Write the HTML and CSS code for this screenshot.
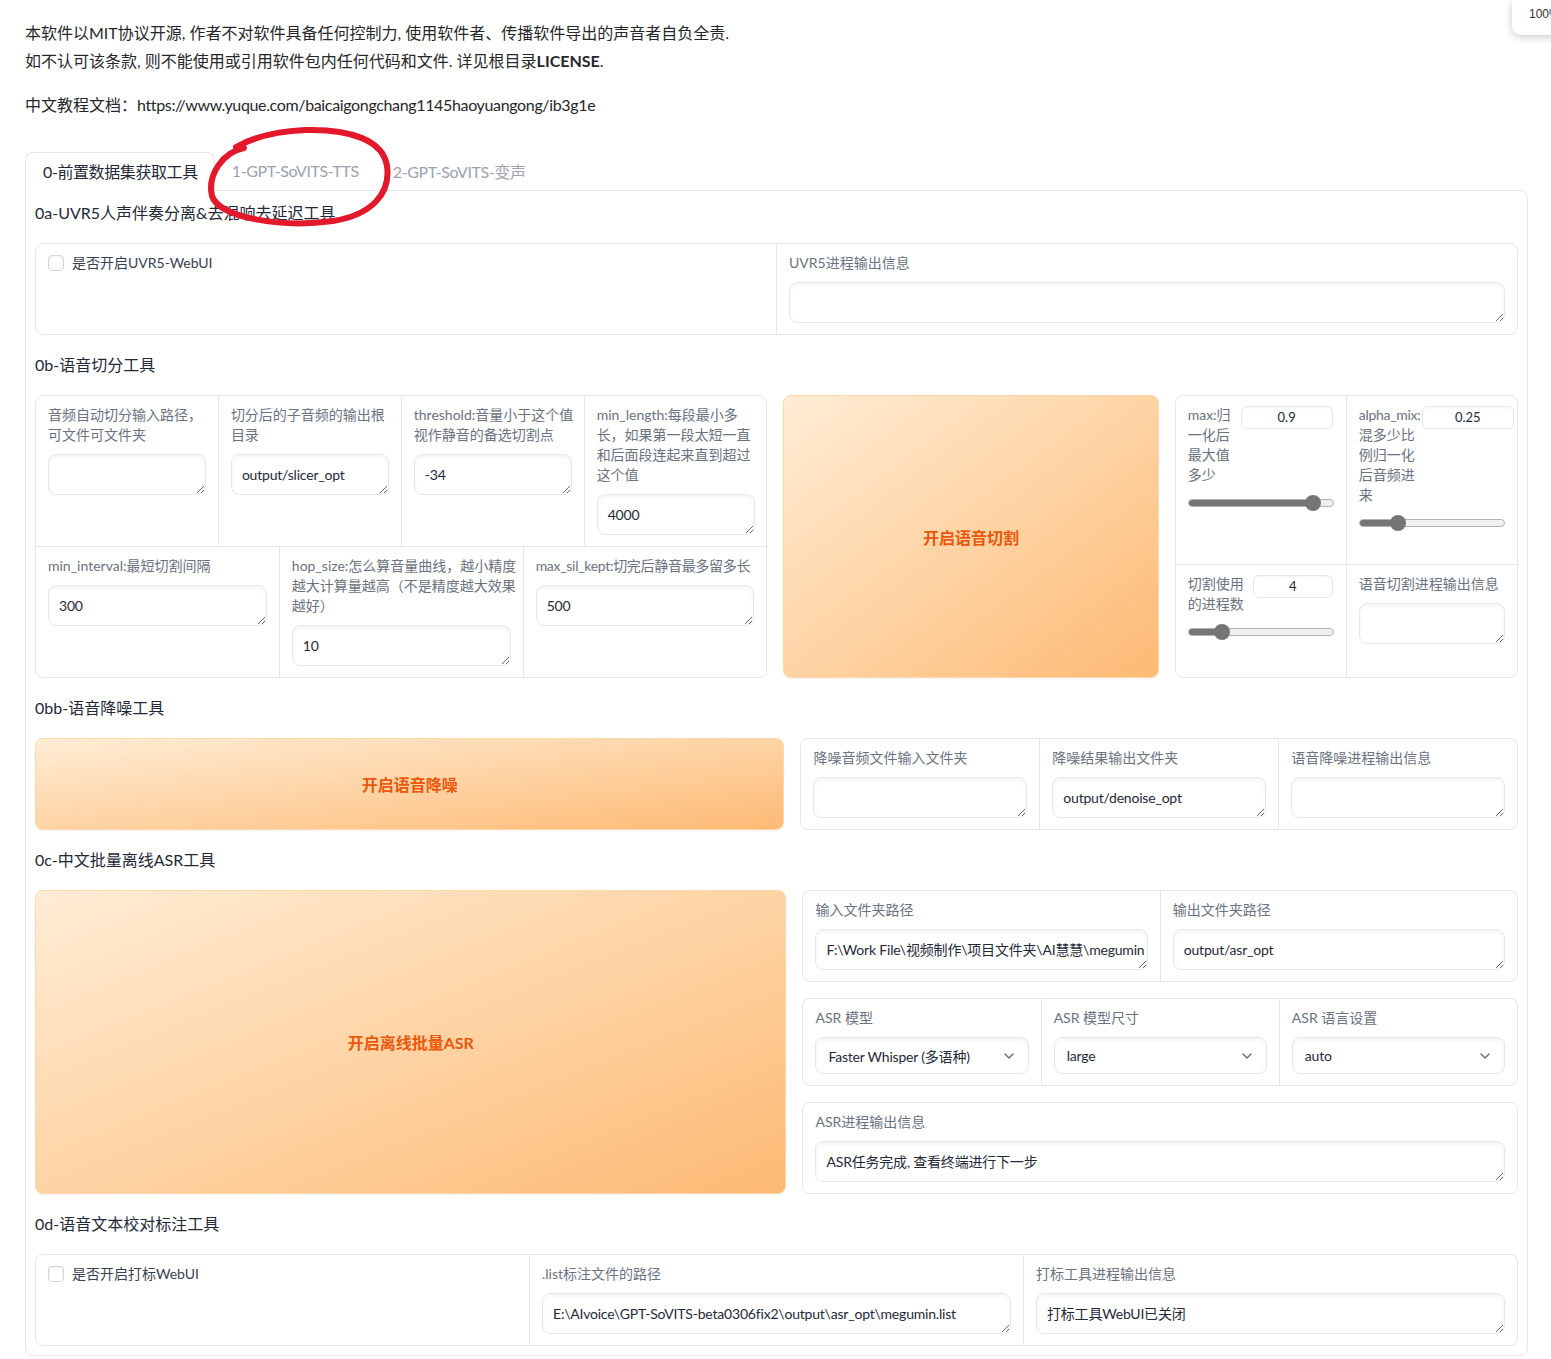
FILE: index.html
```html
<!DOCTYPE html>
<html lang="zh-CN">
<head>
<meta charset="utf-8">
<title>GPT-SoVITS WebUI</title>
<link rel="stylesheet" href="styles.css">
</head>
<body>
<div class="page">
  <div class="intro">
    <p>本软件以MIT协议开源, 作者不对软件具备任何控制力, 使用软件者、传播软件导出的声音者自负全责.<br>如不认可该条款, 则不能使用或引用软件包内任何代码和文件. 详见根目录<strong>LICENSE</strong>.</p>
    <p>中文教程文档：<span class="url">https://www.yuque.com/baicaigongchang1145haoyuangong/ib3g1e</span></p>
  </div>

  <div class="tabs">
    <div class="tab-nav">
      <button class="tab selected">0-前置数据集获取工具</button>
      <button class="tab">1-GPT-SoVITS-TTS</button>
      <button class="tab">2-GPT-SoVITS-变声</button>
    </div>

    <div class="tab-panel">
      <div class="section-title">0a-UVR5人声伴奏分离&amp;去混响去延迟工具</div>
      <div class="row">
        <div class="form grow">
          <div class="cell">
            <label class="check"><input type="checkbox" class="checkbox"><span>是否开启UVR5-WebUI</span></label>
          </div>
          <div class="cell">
            <div class="label">UVR5进程输出信息</div>
            <textarea class="input" wrap="off"></textarea>
          </div>
        </div>
      </div>

      <div class="section-title">0b-语音切分工具</div>
      <div class="row">
        <div class="form stack f-slice-left">
          <div class="form-row">
            <div class="cell">
              <div class="label"><span>音频自动切分输入路径，</span><span>可文件可文件夹</span></div>
              <textarea class="input" wrap="off"></textarea>
            </div>
            <div class="cell">
              <div class="label"><span>切分后的子音频的输出根</span><span>目录</span></div>
              <textarea class="input" wrap="off">output/slicer_opt</textarea>
            </div>
            <div class="cell">
              <div class="label"><span>threshold:音量小于这个值</span><span>视作静音的备选切割点</span></div>
              <textarea class="input" wrap="off">-34</textarea>
            </div>
            <div class="cell">
              <div class="label"><span>min_length:每段最小多</span><span>长，如果第一段太短一直</span><span>和后面段连起来直到超过</span><span>这个值</span></div>
              <textarea class="input" wrap="off">4000</textarea>
            </div>
          </div>
          <div class="form-row">
            <div class="cell">
              <div class="label"><span>min_interval:最短切割间隔</span></div>
              <textarea class="input" wrap="off">300</textarea>
            </div>
            <div class="cell">
              <div class="label"><span>hop_size:怎么算音量曲线，越小精度</span><span>越大计算量越高（不是精度越大效果</span><span>越好）</span></div>
              <textarea class="input" wrap="off">10</textarea>
            </div>
            <div class="cell">
              <div class="label"><span class="tight">max_sil_kept:切完后静音最多留多长</span></div>
              <textarea class="input" wrap="off">500</textarea>
            </div>
          </div>
        </div>

        <button class="btn-primary f-slice-btn">开启语音切割</button>

        <div class="form stack f-slice-right">
          <div class="form-row">
            <div class="cell">
              <div class="slider-head">
                <div class="sl-label w-max"><span>max:归</span><span>一化后</span><span>最大值</span><span>多少</span></div>
                <div class="num n-max">0.9</div>
              </div>
              <div class="slider">
                <div class="track"><div class="fill" style="width:86%"></div></div>
                <div class="thumb" style="left:86%"></div>
              </div>
            </div>
            <div class="cell">
              <div class="slider-head">
                <div class="sl-label w-alpha"><span class="tight">alpha_mix:</span><span>混多少比</span><span>例归一化</span><span>后音频进</span><span>来</span></div>
                <div class="num n-alpha">0.25</div>
              </div>
              <div class="slider">
                <div class="track"><div class="fill" style="width:27%"></div></div>
                <div class="thumb" style="left:27%"></div>
              </div>
            </div>
          </div>
          <div class="form-row">
            <div class="cell">
              <div class="slider-head">
                <div class="sl-label w-proc"><span>切割使用</span><span>的进程数</span></div>
                <div class="num n-proc">4</div>
              </div>
              <div class="slider">
                <div class="track"><div class="fill" style="width:23.5%"></div></div>
                <div class="thumb" style="left:23.5%"></div>
              </div>
            </div>
            <div class="cell">
              <div class="label">语音切割进程输出信息</div>
              <textarea class="input" wrap="off"></textarea>
            </div>
          </div>
        </div>
      </div>

      <div class="section-title">0bb-语音降噪工具</div>
      <div class="row">
        <button class="btn-primary f-denoise-btn">开启语音降噪</button>
        <div class="form f-denoise-form">
          <div class="cell">
            <div class="label">降噪音频文件输入文件夹</div>
            <textarea class="input" wrap="off"></textarea>
          </div>
          <div class="cell">
            <div class="label">降噪结果输出文件夹</div>
            <textarea class="input" wrap="off">output/denoise_opt</textarea>
          </div>
          <div class="cell">
            <div class="label">语音降噪进程输出信息</div>
            <textarea class="input" wrap="off"></textarea>
          </div>
        </div>
      </div>

      <div class="section-title">0c-中文批量离线ASR工具</div>
      <div class="row">
        <button class="btn-primary f-asr-btn">开启离线批量ASR</button>
        <div class="column f-asr-col">
          <div class="form">
            <div class="cell">
              <div class="label">输入文件夹路径</div>
              <textarea class="input" wrap="off">F:\Work File\视频制作\项目文件夹\AI慧慧\megumin</textarea>
            </div>
            <div class="cell">
              <div class="label">输出文件夹路径</div>
              <textarea class="input" wrap="off">output/asr_opt</textarea>
            </div>
          </div>
          <div class="form">
            <div class="cell">
              <div class="label">ASR 模型</div>
              <div class="dropdown"><span>Faster Whisper (多语种)</span><svg class="chev" viewBox="0 0 10 6" width="10" height="6"><polyline points="1,1 5,5 9,1"/></svg></div>
            </div>
            <div class="cell">
              <div class="label">ASR 模型尺寸</div>
              <div class="dropdown"><span>large</span><svg class="chev" viewBox="0 0 10 6" width="10" height="6"><polyline points="1,1 5,5 9,1"/></svg></div>
            </div>
            <div class="cell">
              <div class="label">ASR 语言设置</div>
              <div class="dropdown"><span>auto</span><svg class="chev" viewBox="0 0 10 6" width="10" height="6"><polyline points="1,1 5,5 9,1"/></svg></div>
            </div>
          </div>
          <div class="form">
            <div class="cell">
              <div class="label">ASR进程输出信息</div>
              <textarea class="input" wrap="off">ASR任务完成, 查看终端进行下一步</textarea>
            </div>
          </div>
        </div>
      </div>

      <div class="section-title">0d-语音文本校对标注工具</div>
      <div class="row">
        <div class="form grow">
          <div class="cell">
            <label class="check"><input type="checkbox" class="checkbox"><span>是否开启打标WebUI</span></label>
          </div>
          <div class="cell">
            <div class="label">.list标注文件的路径</div>
            <textarea class="input" wrap="off">E:\AIvoice\GPT-SoVITS-beta0306fix2\output\asr_opt\megumin.list</textarea>
          </div>
          <div class="cell">
            <div class="label">打标工具进程输出信息</div>
            <textarea class="input" wrap="off">打标工具WebUI已关闭</textarea>
          </div>
        </div>
      </div>
    </div>
  </div>

  <svg class="annotation" width="1551" height="400" viewBox="0 0 1551 400">
    <path d="M 244 148 C 223 152 207 175 212 196 C 219 218 282 228 333 221 C 371 215 391 194 387 166 C 383 140 350 129 306 130 C 277 131 254 137 236 147" />
  </svg>

  <div class="zoom-pop">100%</div>
</div>
</body>
</html>
```

FILE: styles.css
```css
* { box-sizing: border-box; }

html, body {
  margin: 0;
  padding: 0;
  overflow: hidden;
  background: #ffffff;
}

body {
  font-family: Lato, "Noto Sans CJK SC", sans-serif;
  font-size: 16px;
  color: #1f2937;
}

.page {
  position: relative;
  width: 1551px;
  height: 1359px;
  padding: 19px 23px 0 25px;
}

/* intro */
.intro p {
  margin: 0 0 16px;
  line-height: 28px;
  color: #27272a;
}
.intro p:last-child { margin-bottom: 0; }
.intro strong { font-weight: 700; }
.intro .url { letter-spacing: -0.35px; }

/* tabs */
.tabs { margin-top: 33px; }

.tab-nav {
  display: flex;
  align-items: flex-start;
  height: 38px;
}

.tab {
  font: inherit;
  font-size: 16px;
  letter-spacing: -0.4px;
  height: 39px;
  margin: 0 0 -1px;
  padding: 0 16px 3px;
  background: transparent;
  border: 1px solid transparent;
  border-bottom: none;
  border-radius: 8px 8px 0 0;
  color: #9ca3af;
  position: relative;
  z-index: 1;
  cursor: pointer;
}
.tab.selected {
  background: #ffffff;
  border-color: #e5e7eb;
  color: #1f2937;
  padding-left: 17px;
}

.tab-panel {
  border: 1px solid #e5e7eb;
  border-radius: 0 8px 8px 8px;
  padding: 11px 9px 9px;
  display: flex;
  flex-direction: column;
  gap: 19px;
}

.section-title {
  line-height: 22px;
  font-size: 16px;
  color: #1f2937;
}

/* rows & forms */
.row {
  display: flex;
  gap: 16px;
  align-items: stretch;
}

.column {
  display: flex;
  flex-direction: column;
  gap: 16px;
}

.form {
  display: flex;
  gap: 1px;
  background: #e5e7eb;
  border: 1px solid #e5e7eb;
  border-radius: 8px;
  overflow: hidden;
}
.form.grow { flex: 1 1 0; }
.form.stack { flex-direction: column; }

.form-row {
  display: flex;
  gap: 1px;
  flex: 1 1 auto;
}

.cell {
  flex: 1 1 0;
  min-width: 0;
  background: #ffffff;
  padding: 9px 12px 11px;
}

.f-slice-left { flex: 734 1 0; }
.f-slice-btn { flex: 375 1 0; }
.f-slice-right { flex: 343 1 0; }
.f-denoise-btn { flex: 750 1 0; }
.f-denoise-form { flex: 718 1 0; }
.f-asr-btn { flex: 751 1 0; }
.f-asr-col { flex: 717 1 0; }

/* labels */
.label {
  font-size: 14px;
  line-height: 20px;
  color: #6b7280;
  margin-bottom: 9px;
}
.label span {
  display: block;
  white-space: nowrap;
}
.tight { letter-spacing: -0.3px; }

/* text inputs */
.input {
  display: block;
  width: 100%;
  height: 41px;
  margin: 0;
  padding: 9px 10px;
  font-family: Lato, "Noto Sans CJK SC", sans-serif;
  font-size: 14px;
  line-height: 21px;
  letter-spacing: -0.2px;
  color: #1f2937;
  background: #ffffff;
  border: 1px solid #e5e7eb;
  border-radius: 8px;
  box-shadow: inset 0 2px 4px rgba(0, 0, 0, 0.05);
  resize: vertical;
  overflow: hidden;
  white-space: pre;
  outline: none;
}

/* checkbox */
.check {
  display: flex;
  align-items: center;
  gap: 8px;
  font-size: 14px;
  line-height: 20px;
  color: #374151;
}
.checkbox {
  appearance: none;
  -webkit-appearance: none;
  width: 16px;
  height: 16px;
  margin: 0;
  border: 1px solid #d1d5db;
  border-radius: 4px;
  background: #ffffff;
  box-shadow: inset 0 1px 2px rgba(0, 0, 0, 0.05);
  flex: none;
}

/* primary buttons */
.btn-primary {
  font-family: Lato, "Noto Sans CJK SC", sans-serif;
  font-size: 16px;
  font-weight: 700;
  color: #ea580c;
  background: linear-gradient(to bottom right, #ffedd5, #fdba74);
  border: 1px solid #fed7aa;
  border-radius: 8px;
  box-shadow: 0 1px 2px rgba(0, 0, 0, 0.05);
  min-width: 0;
  padding: 0;
  cursor: pointer;
}

/* sliders */
.slider-head {
  display: flex;
  align-items: flex-start;
}
.sl-label {
  flex: none;
  font-size: 14px;
  line-height: 20px;
  color: #6b7280;
}
.sl-label span {
  display: block;
  white-space: nowrap;
}
.w-max { width: 45px; }
.w-alpha { width: 62px; }
.w-proc { width: 57px; }

.num {
  flex: none;
  height: 23px;
  margin-top: 1px;
  border: 1px solid #e5e7eb;
  border-radius: 6px;
  text-align: center;
  font-size: 13px;
  line-height: 21px;
  color: #1f2937;
  background: #ffffff;
  box-shadow: inset 0 1px 2px rgba(0, 0, 0, 0.04);
}
.n-max { width: 92px; margin-left: 8px; }
.n-alpha { width: 92px; margin-left: 1px; }
.n-proc { width: 80px; margin-left: 8px; }

.slider {
  position: relative;
  height: 16px;
  margin-top: 10px;
  padding-top: 4px;
}
.track {
  height: 8px;
  border-radius: 4px;
  background: #efefef;
  border: 1px solid #b3b3b3;
  overflow: hidden;
}
.fill {
  height: 100%;
  background: #757575;
}
.thumb {
  position: absolute;
  top: 0;
  width: 16px;
  height: 16px;
  margin-left: -8px;
  border-radius: 50%;
  background: #757575;
}

/* dropdowns */
.dropdown {
  display: flex;
  align-items: center;
  justify-content: space-between;
  height: 37px;
  padding: 0 14px 0 12px;
  font-size: 14px;
  letter-spacing: -0.2px;
  color: #1f2937;
  background: #ffffff;
  border: 1px solid #e5e7eb;
  border-radius: 8px;
  box-shadow: inset 0 2px 4px rgba(0, 0, 0, 0.05);
}
.chev {
  fill: none;
  stroke: #6b7280;
  stroke-width: 1.5;
  stroke-linecap: round;
  stroke-linejoin: round;
}

/* hand-drawn annotation overlay */
.annotation {
  position: absolute;
  left: 0;
  top: 0;
  pointer-events: none;
  z-index: 5;
}
.annotation path {
  fill: none;
  stroke: #e4182b;
  stroke-width: 6;
  stroke-linecap: round;
  stroke-linejoin: round;
}

/* browser zoom popup */
.zoom-pop {
  position: absolute;
  top: 0;
  left: 1512px;
  width: 60px;
  height: 35px;
  padding: 6px 0 0 17px;
  background: #ffffff;
  border-radius: 0 0 0 9px;
  box-shadow: 0 2px 8px rgba(0, 0, 0, 0.22);
  font-family: "Liberation Sans", Arial, sans-serif;
  font-size: 12px;
  line-height: 16px;
  color: #333333;
  z-index: 6;
}
```
